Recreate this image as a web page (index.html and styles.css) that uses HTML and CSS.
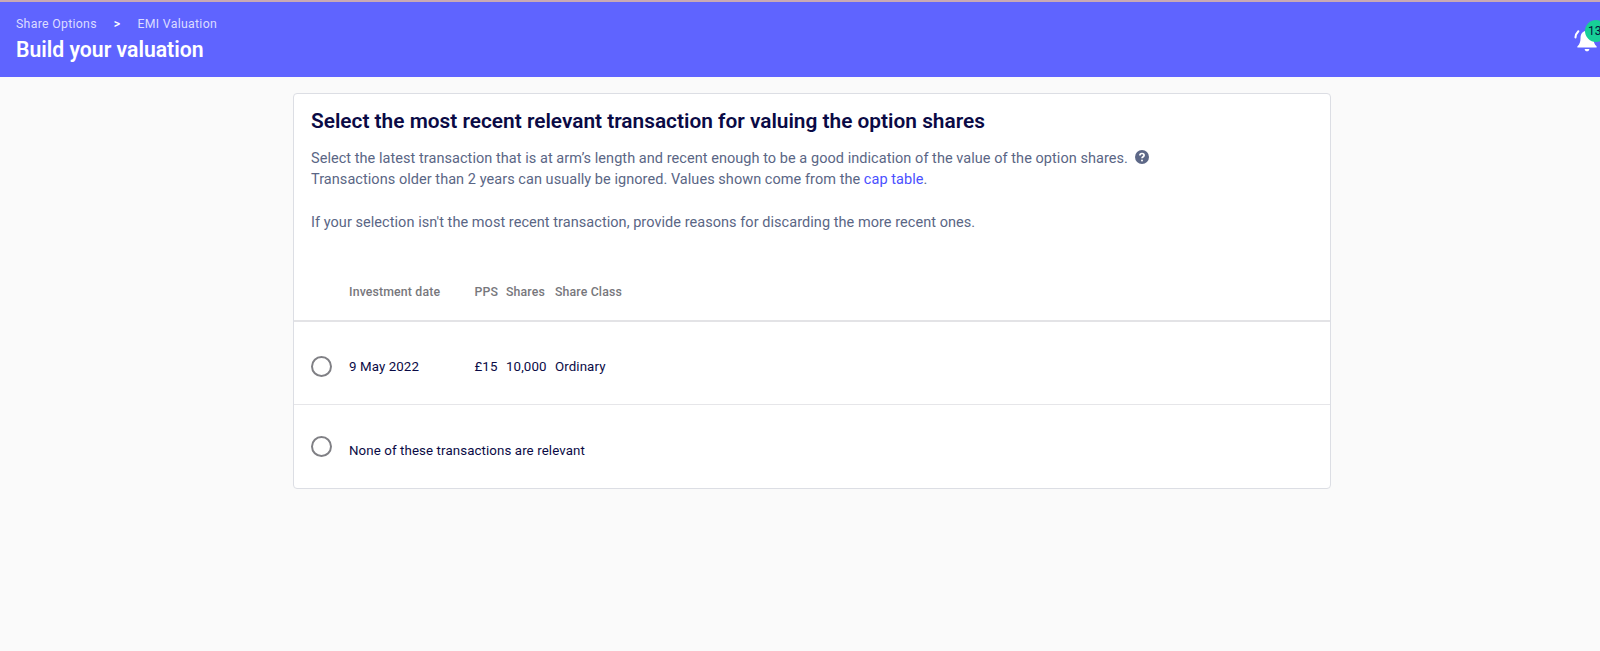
FILE: index.html
```html
<!DOCTYPE html>
<html lang="en">
<head>
<meta charset="utf-8">
<title>Build your valuation</title>
<link rel="stylesheet" href="styles.css">
</head>
<body>
<header class="topbar">
  <div class="topbar-text">
    <nav class="crumbs"><span>Share Options</span><span class="crumb-sep">&gt;</span><span>EMI Valuation</span></nav>
    <h1 class="page-title">Build your valuation</h1>
  </div>
  <div class="bell">
    <svg class="bell-icon" width="30" height="30" viewBox="0 0 26 26" aria-hidden="true">
      <path fill="#fff" d="M13 5c-3.600 0-5.600 2.700-5.600 6.200 0 3.400-.8 5.400-2.600 7.200-.5.5-.2 1.200.5 1.200h15.400c.7 0 1-.7.5-1.200-1.800-1.800-2.600-3.800-2.600-7.200C18.600 7.700 16.600 5 13 5z"/>
      <path fill="#fff" d="M11 20.800h4c0 1.200-.9 2-2 2s-2-.8-2-2z"/>
      <path fill="none" stroke="#fff" stroke-width="1.800" stroke-linecap="round" d="M5.500 5.500C4 7 3.200 8.700 3 10.800"/>
    </svg>
    <span class="bell-badge">13</span>
  </div>
</header>
<main class="content">
  <section class="card">
    <div class="card-head">
      <h2 class="card-title">Select the most recent relevant transaction for valuing the option shares</h2>
      <p class="card-copy">Select the latest transaction that is at arm’s length and recent enough to be a good indication of the value of the option shares.
        <svg class="help" width="14" height="14" viewBox="0 0 14 14" aria-hidden="true"><circle cx="7" cy="7" r="7" fill="#5d6887"/><path fill="none" stroke="#fff" stroke-width="1.700" d="M4.900 5.400c0-1.200.9-1.900 2.100-1.900s2.100.7 2.100 1.800c0 1.500-2.100 1.500-2.100 3"/><circle cx="7" cy="10.400" r="1" fill="#fff"/></svg><br>
        Transactions older than 2 years can usually be ignored. Values shown come from the <a class="link" href="#">cap table</a>.</p>
      <p class="card-copy">If your selection isn't the most recent transaction, provide reasons for discarding the more recent ones.</p>
    </div>
    <table class="tx-table">
      <thead>
        <tr>
          <th class="col-radio"></th>
          <th class="col-date">Investment date</th>
          <th class="col-pps">PPS</th>
          <th class="col-shares">Shares</th>
          <th class="col-class">Share Class</th>
          <th></th>
        </tr>
      </thead>
      <tbody>
        <tr class="row-tx">
          <td class="col-radio"><span class="radio"></span></td>
          <td>9 May 2022</td>
          <td>£15</td>
          <td>10,000</td>
          <td>Ordinary</td>
          <td></td>
        </tr>
        <tr class="row-none">
          <td class="col-radio"><span class="radio"></span></td>
          <td colspan="5">None of these transactions are relevant</td>
        </tr>
      </tbody>
    </table>
  </section>
</main>
</body>
</html>
```
FILE: styles.css
```css
* { box-sizing: border-box; }
html, body { margin: 0; height: 100%; }
body {
  background: #fafafa;
  font-family: Roboto, "Liberation Sans", sans-serif;
  color: #0a0a45;
  overflow: hidden;
}
.topbar {
  height: 77px;
  background: #5f64ff;
  border-top: 2px solid #c9a9b4;
  display: flex;
  justify-content: space-between;
  padding: 14px 0 0 16px;
  color: #fff;
}
.crumbs {
  display: flex;
  font-size: 12.300px;
  line-height: 16px;
  letter-spacing: 0.3px;
  color: #dcdcff;
}
.crumb-sep { margin: 0 17px; color: #fff; font-weight: 500; }
.page-title {
  margin: 5px 0 0;
  font-size: 21.200px;
  line-height: 26px;
  font-weight: 600;
}
.bell { position: relative; width: 40px; }
.bell-icon { position: absolute; left: 12px; top: 9px; }
.bell-badge {
  position: absolute;
  left: 25px;
  top: 4px;
  width: 22px;
  height: 22px;
  border-radius: 50%;
  background: #17cf97;
  color: #06123c;
  font-size: 12px;
  line-height: 22px;
  padding-left: 3px;
  white-space: nowrap;
}
.content { display: flex; justify-content: center; padding: 16px 0 0 24px; }
.card {
  width: 1038px;
  background: #fff;
  border: 1px solid #dcdee4;
  border-radius: 4px;
  overflow: hidden;
}
.card-head { padding: 15px 17px 0; }
.card-title {
  margin: 0;
  font-size: 20.850px;
  line-height: 24px;
  font-weight: 600;
  color: #0a0a45;
}
.card-copy {
  margin: 15px 0 0;
  font-size: 14.500px;
  line-height: 21px;
  letter-spacing: 0.05px;
  color: #5a6685;
}
.card-copy + .card-copy { margin-top: 22px; }
.help { vertical-align: -1px; margin-left: 3px; }
.link { color: #4a50ff; text-decoration: none; }
.tx-table {
  border-collapse: collapse;
  table-layout: fixed;
  margin-top: 39px;
  width: 100%;
  font-size: 13.300px;
}
.tx-table th {
  height: 49px;
  padding: 0 0 9px 0;
  text-align: left;
  font-weight: 500;
  font-size: 12.300px;
  color: #77777c;
  border-bottom: 2px solid #e3e3e6;
  white-space: nowrap;
  letter-spacing: 0.15px;
}
.tx-table td {
  height: 83px;
  padding: 0;
  border-bottom: 1px solid #e6e6e9;
  white-space: nowrap;
  letter-spacing: 0.1px;
}
.tx-table tr:last-child td { border-bottom: 0; height: 84px; }
.tx-table .col-radio { width: 55px; padding-left: 17px; }
.col-date { width: 125.500px; }
.col-pps { width: 31.500px; }
.col-shares { width: 49px; }
.col-class { width: 100px; }
.radio {
  display: block;
  width: 21px;
  height: 21px;
  border: 2px solid #808085;
  border-radius: 50%;
}
.tx-table .row-tx td { padding-top: 8px; }
.tx-table .row-none td { padding-top: 8px; }
.tx-table .row-none .col-radio { padding-top: 1px; }
```
